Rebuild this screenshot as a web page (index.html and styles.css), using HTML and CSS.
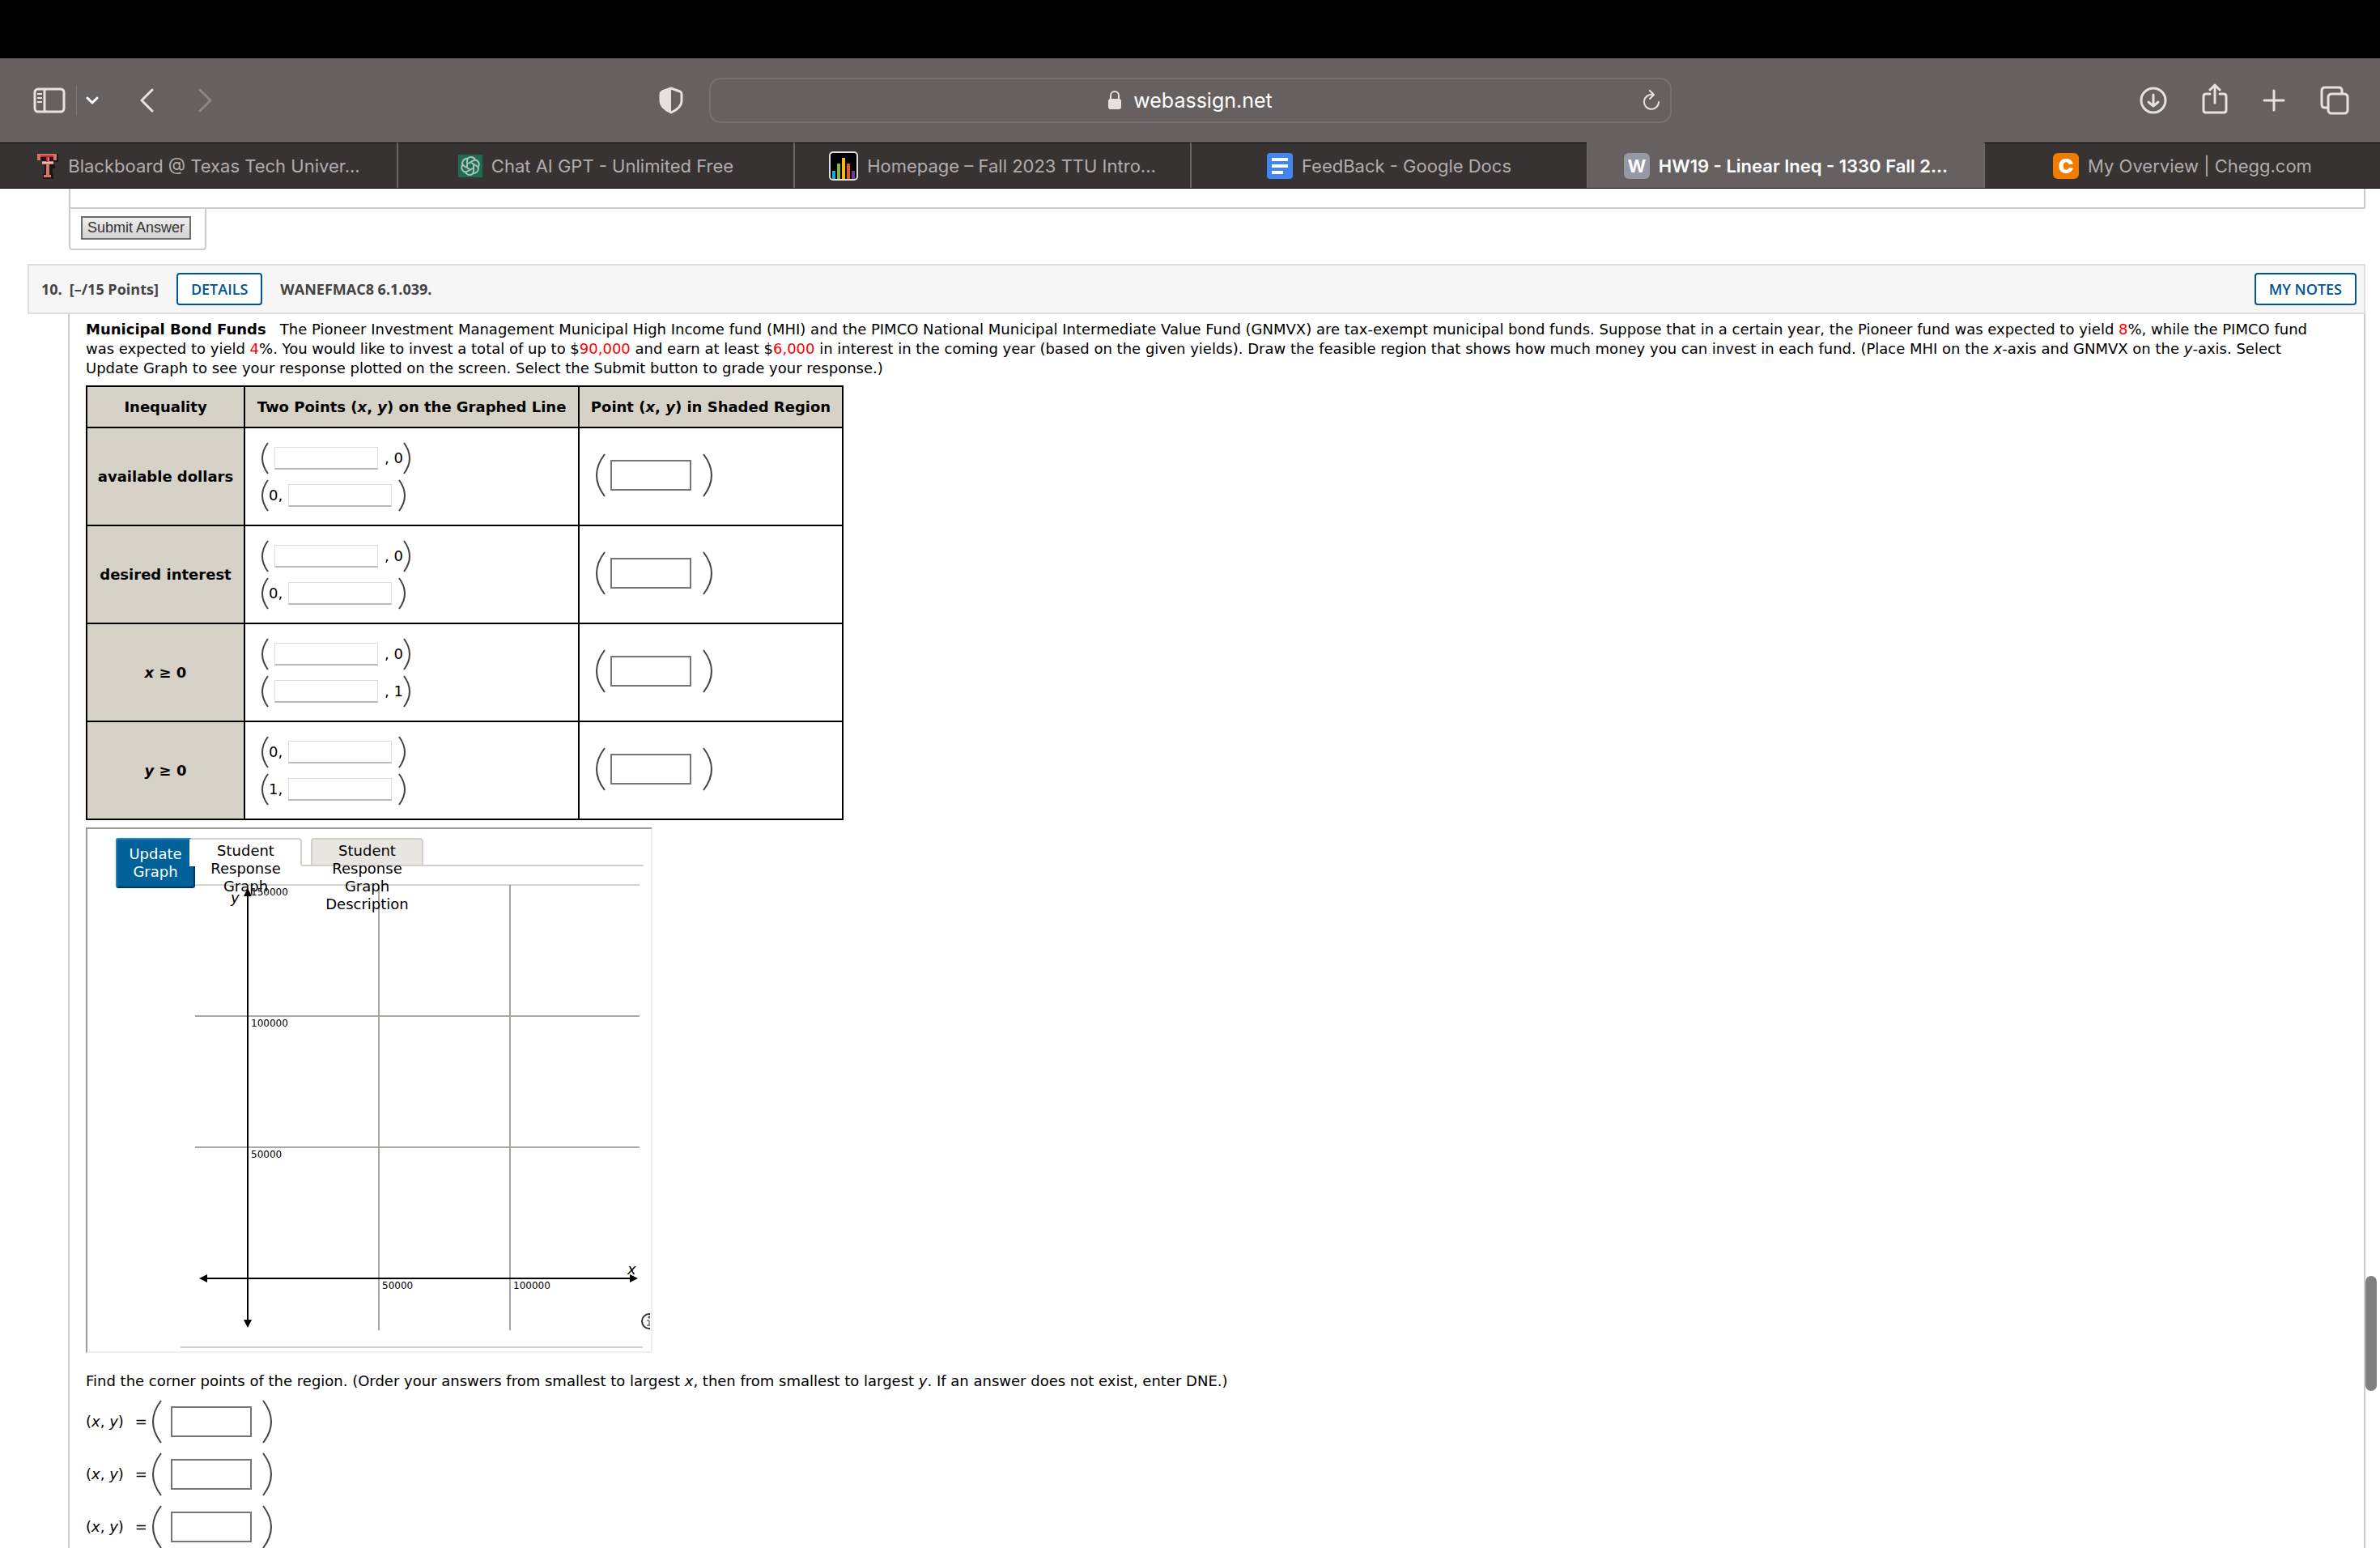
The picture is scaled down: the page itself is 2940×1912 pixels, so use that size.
FILE: index.html
```html
<!DOCTYPE html>
<html lang="en">
<head>
  <meta charset="UTF-8">
  <title>HW19 - Linear Ineq - 1330 Fall 2023</title>
  <link rel="stylesheet" href="styles.css">
</head>
<body>

  <!-- Browser toolbar -->
  <header class="browser">
    <div class="toolbar">
      <div class="tools-left">
        <button class="icon-btn" aria-label="Sidebar"><svg width="40" height="32" viewBox="0 0 40 32" fill="none" stroke="#e6e1e0" stroke-width="3"><rect x="2" y="2" width="36" height="28" rx="4"/><path d="M14 2v28"/><path d="M5 8h6M5 13h6M5 18h6" stroke-width="2"/></svg></button>
        <span class="divider"></span>
        <button class="icon-btn" aria-label="Tab groups"><svg width="16" height="10" viewBox="0 0 16 10" fill="none" stroke="#fff" stroke-width="3" stroke-linecap="round" stroke-linejoin="round"><path d="M2 2l6 6 6-6"/></svg></button>
        <button class="icon-btn back" aria-label="Back"><svg width="18" height="30" viewBox="0 0 18 30" fill="none" stroke="#e6e1e0" stroke-width="3" stroke-linecap="round" stroke-linejoin="round"><path d="M16 2L3 15l13 13"/></svg></button>
        <button class="icon-btn forward" aria-label="Forward"><svg width="18" height="30" viewBox="0 0 18 30" fill="none" stroke="#8d8786" stroke-width="3" stroke-linecap="round" stroke-linejoin="round"><path d="M2 2l13 13L2 28"/></svg></button>
      </div>
      <div class="tools-center">
        <button class="icon-btn" aria-label="Privacy report"><svg width="30" height="34" viewBox="0 0 30 34"><path d="M15 2l11 4q2 1 2 3v9q0 8-13 14Q2 26 2 18V9q0-2 2-3z" fill="none" stroke="#e6e1e0" stroke-width="3" stroke-linejoin="round"/><path d="M15 2L4 6Q2 7 2 9v9q0 8 13 14z" fill="#e6e1e0"/></svg></button>
        <div class="address">
          <svg width="18" height="24" viewBox="0 0 18 24"><rect x="1" y="10" width="16" height="13" rx="3" fill="#e6e1e0"/><path d="M4 11V6a5 5 0 0 1 10 0v5" fill="none" stroke="#e6e1e0" stroke-width="2"/></svg>
          <span>webassign.net</span>
          <button class="icon-btn reload" aria-label="Reload"><svg width="22" height="26" viewBox="0 0 22 26" fill="none" stroke="#e6e1e0" stroke-width="2" stroke-linecap="round" stroke-linejoin="round"><path d="M13 6a9 9 0 1 0 7 9M9 1l5 5-5 5"/></svg></button>
        </div>
      </div>
      <div class="tools-right">
        <button class="icon-btn" aria-label="Downloads"><svg width="34" height="34" viewBox="0 0 34 34" fill="none" stroke="#e6e1e0" stroke-width="3" stroke-linecap="round" stroke-linejoin="round"><circle cx="17" cy="17" r="15"/><path d="M17 10v14M11 19l6 5 6-5"/></svg></button>
        <button class="icon-btn share" aria-label="Share"><svg width="32" height="38" viewBox="0 0 32 38" fill="none" stroke="#e6e1e0" stroke-width="3" stroke-linecap="round" stroke-linejoin="round"><path d="M10 13H5q-3 0-3 3v17q0 3 3 3h22q3 0 3-3V16q0-3-3-3h-5M16 24V2M10 8l6-6 6 6"/></svg></button>
        <button class="icon-btn" aria-label="New tab"><svg width="28" height="28" viewBox="0 0 28 28" stroke="#e6e1e0" stroke-width="3" stroke-linecap="round"><path d="M14 2v24M2 14h24"/></svg></button>
        <button class="icon-btn" aria-label="Tab overview"><svg width="36" height="36" viewBox="0 0 36 36" fill="none" stroke="#e6e1e0" stroke-width="3"><rect x="10" y="10" width="24" height="24" rx="4"/><path d="M10 27H6q-4 0-4-4V6q0-4 4-4h17q4 0 4 4v4"/></svg></button>
      </div>
    </div>

    <nav class="tabs">
      <a href="#" class="tab"><svg width="28" height="32" viewBox="0 0 28 32"><path d="M1 1h26v10h-6V9h-1v5h3v5h-3v7h1v6H8v-6h2V14H7V9H6H1z" fill="#1a1717"/><path d="M1 1h24v8h-4V5h-5v5h5v4h-5v13h2v3H9v-3h3V14H7v-4h5V5H5v4H1z" fill="#d8736c"/><path d="M5 3h16v2H5zM12 5h2v6h-2z" fill="#c22a2c"/><path d="M7 11h14v2H7z" fill="#e5bdb6"/></svg>Blackboard @ Texas Tech Univer...</a>
      <a href="#" class="tab"><svg width="30" height="28" viewBox="0 0 30 28"><rect width="30" height="28" fill="#1e6b52"/><g fill="none" stroke="#a9c2b9" stroke-width="2"><path id="petal" d="M11 15V8q0-5 5-5 3 0 5 3"/><use href="#petal" transform="rotate(60 15 14)"/><use href="#petal" transform="rotate(120 15 14)"/><use href="#petal" transform="rotate(180 15 14)"/><use href="#petal" transform="rotate(240 15 14)"/><use href="#petal" transform="rotate(300 15 14)"/></g></svg>Chat AI GPT - Unlimited Free</a>
      <a href="#" class="tab"><svg width="36" height="36" viewBox="0 0 36 36"><rect x="1" y="1" width="34" height="34" rx="4" fill="#000" stroke="#e0dede" stroke-width="2"/><path d="M4 24h4v10H4z" fill="#1ba7e0"/><path d="M10 15h4v19h-4z" fill="#7fba3c"/><path d="M16 8h4v26h-4z" fill="#f9b815"/><path d="M22 15h4v19h-4z" fill="#e35c26"/><path d="M28 24h4v10h-4z" fill="#6a3c97"/></svg>Homepage – Fall 2023 TTU Intro...</a>
      <a href="#" class="tab"><svg width="32" height="32" viewBox="0 0 32 32"><rect width="32" height="32" rx="4" fill="#4285f4"/><path d="M6 6h20v4H6zM6 14h20v4H6zM6 22h14v4H6z" fill="#fff"/></svg>FeedBack - Google Docs</a>
      <a href="#" class="tab active"><span class="favicon gray">W</span>HW19 - Linear Ineq - 1330 Fall 2...</a>
      <a href="#" class="tab"><span class="favicon orange">C</span>My Overview | Chegg.com</a>
    </nav>
  </header>

  <main class="page">
    <!-- End of question 9 -->
    <section class="previous"></section>
    <div class="submit-box">
      <button class="submit">Submit Answer</button>
    </div>

    <!-- Question 10 -->
    <section class="question">
      <div class="question-header">
        <span class="number">10.</span>
        <span class="points">[–/15 Points]</span>
        <button class="outline-btn">DETAILS</button>
        <span class="code">WANEFMAC8 6.1.039.</span>
        <button class="outline-btn notes">MY NOTES</button>
      </div>

      <div class="question-body">
        <p class="prompt"><b>Municipal Bond Funds</b> &nbsp; The Pioneer Investment Management Municipal High Income fund (MHI) and the PIMCO National Municipal Intermediate Value Fund (GNMVX) are tax-exempt municipal bond funds. Suppose that in a certain year, the Pioneer fund was expected to yield <span class="red">8</span>%, while the PIMCO fund<br>
        was expected to yield <span class="red">4</span>%. You would like to invest a total of up to $<span class="red">90,000</span> and earn at least $<span class="red">6,000</span> in interest in the coming year (based on the given yields). Draw the feasible region that shows how much money you can invest in each fund. (Place MHI on the <i>x</i>-axis and GNMVX on the <i>y</i>-axis. Select<br>
        Update Graph to see your response plotted on the screen. Select the Submit button to grade your response.)</p>

        <table class="inequalities">
          <thead>
            <tr>
              <th class="col-name">Inequality</th>
              <th class="col-line">Two Points (<i>x</i>, <i>y</i>) on the Graphed Line</th>
              <th class="col-point">Point (<i>x</i>, <i>y</i>) in Shaded Region</th>
            </tr>
          </thead>
          <tbody>
            <tr>
              <th>available dollars</th>
              <td>
                <div class="pair"><svg class="paren" viewBox="0 0 10 40"><path d="M9 1Q-5 20 9 39"/></svg><input type="text" class="x-first" aria-label="available dollars x-intercept"><span>, 0</span><svg class="paren" viewBox="0 0 10 40"><path d="M1 1Q15 20 1 39"/></svg></div>
                <div class="pair"><svg class="paren" viewBox="0 0 10 40"><path d="M9 1Q-5 20 9 39"/></svg><span>0,</span><input type="text" class="y-last" aria-label="available dollars y-intercept"><svg class="paren" viewBox="0 0 10 40"><path d="M1 1Q15 20 1 39"/></svg></div>
              </td>
              <td><div class="point"><svg class="paren-lg" viewBox="0 0 13 54"><path d="M12 1Q-8 27 12 53"/></svg><input type="text" aria-label="available dollars shaded point"><svg class="paren-lg" viewBox="0 0 13 54"><path d="M1 1Q21 27 1 53"/></svg></div></td>
            </tr>
            <tr>
              <th>desired interest</th>
              <td>
                <div class="pair"><svg class="paren" viewBox="0 0 10 40"><path d="M9 1Q-5 20 9 39"/></svg><input type="text" class="x-first" aria-label="desired interest x-intercept"><span>, 0</span><svg class="paren" viewBox="0 0 10 40"><path d="M1 1Q15 20 1 39"/></svg></div>
                <div class="pair"><svg class="paren" viewBox="0 0 10 40"><path d="M9 1Q-5 20 9 39"/></svg><span>0,</span><input type="text" class="y-last" aria-label="desired interest y-intercept"><svg class="paren" viewBox="0 0 10 40"><path d="M1 1Q15 20 1 39"/></svg></div>
              </td>
              <td><div class="point"><svg class="paren-lg" viewBox="0 0 13 54"><path d="M12 1Q-8 27 12 53"/></svg><input type="text" aria-label="desired interest shaded point"><svg class="paren-lg" viewBox="0 0 13 54"><path d="M1 1Q21 27 1 53"/></svg></div></td>
            </tr>
            <tr>
              <th><i>x</i> ≥ 0</th>
              <td>
                <div class="pair"><svg class="paren" viewBox="0 0 10 40"><path d="M9 1Q-5 20 9 39"/></svg><input type="text" class="x-first" aria-label="x at y = 0"><span>, 0</span><svg class="paren" viewBox="0 0 10 40"><path d="M1 1Q15 20 1 39"/></svg></div>
                <div class="pair"><svg class="paren" viewBox="0 0 10 40"><path d="M9 1Q-5 20 9 39"/></svg><input type="text" class="x-first" aria-label="x at y = 1"><span>, 1</span><svg class="paren" viewBox="0 0 10 40"><path d="M1 1Q15 20 1 39"/></svg></div>
              </td>
              <td><div class="point"><svg class="paren-lg" viewBox="0 0 13 54"><path d="M12 1Q-8 27 12 53"/></svg><input type="text" aria-label="x ≥ 0 shaded point"><svg class="paren-lg" viewBox="0 0 13 54"><path d="M1 1Q21 27 1 53"/></svg></div></td>
            </tr>
            <tr>
              <th><i>y</i> ≥ 0</th>
              <td>
                <div class="pair"><svg class="paren" viewBox="0 0 10 40"><path d="M9 1Q-5 20 9 39"/></svg><span>0,</span><input type="text" class="y-last" aria-label="y at x = 0"><svg class="paren" viewBox="0 0 10 40"><path d="M1 1Q15 20 1 39"/></svg></div>
                <div class="pair"><svg class="paren" viewBox="0 0 10 40"><path d="M9 1Q-5 20 9 39"/></svg><span>1,</span><input type="text" class="y-last" aria-label="y at x = 1"><svg class="paren" viewBox="0 0 10 40"><path d="M1 1Q15 20 1 39"/></svg></div>
              </td>
              <td><div class="point"><svg class="paren-lg" viewBox="0 0 13 54"><path d="M12 1Q-8 27 12 53"/></svg><input type="text" aria-label="y ≥ 0 shaded point"><svg class="paren-lg" viewBox="0 0 13 54"><path d="M1 1Q21 27 1 53"/></svg></div></td>
            </tr>
          </tbody>
        </table>

        <!-- Graph tool, the tabs hang over the plot -->
        <div class="graph-frame">
          <div class="graph-tabs">
            <span class="tab-line"></span>
            <button class="update">Update<br>Graph</button>
            <button class="graph-tab selected">Student<br>Response<br>Graph</button>
            <button class="graph-tab">Student<br>Response<br>Graph<br>Description</button>
          </div>
          <svg class="plot" width="697" height="645" viewBox="108 1024 697 645">
            <g stroke="#a9a8a0" stroke-width="2">
              <path d="M241 1093h549" stroke-width="1"/>
              <path d="M241 1255h549M241 1417h549M468 1093v550M630 1093v550"/>
            </g>
            <path d="M306 1100v534M252 1579h530" stroke="#000" stroke-width="2"/>
            <path d="M306 1097l5 10h-10zM306 1640l5-10h-10zM246 1579l10-5v10zM788 1579l-10-5v10z"/>
            <path d="M223 1664h571" stroke="#d2d2ce" stroke-width="2"/>
            <g class="ticks">
              <text x="310" y="1106">150000</text>
              <text x="310" y="1268">100000</text>
              <text x="310" y="1430">50000</text>
              <text x="472" y="1592">50000</text>
              <text x="634" y="1592">100000</text>
            </g>
            <text class="axis" x="285" y="1115">y</text>
            <text class="axis" x="775" y="1574">x</text>
            <svg x="790" y="1620" width="13" height="24" viewBox="0 0 13 24"><ellipse cx="12" cy="12" rx="9" ry="9" fill="none" stroke="#333" stroke-width="2"/><path d="M9 11h3v6M9 17h4M11 6h2v2h-2z" fill="none" stroke="#333" stroke-width="1"/></svg>
          </svg>
        </div>

        <p class="corners">Find the corner points of the region. (Order your answers from smallest to largest <i>x</i>, then from smallest to largest <i>y</i>. If an answer does not exist, enter DNE.)</p>
        <div class="answer"><label for="corner1">(<i>x</i>, <i>y</i>)</label><span>=</span><svg class="paren-lg" viewBox="0 0 13 54"><path d="M12 1Q-8 27 12 53"/></svg><input type="text" id="corner1"><svg class="paren-lg" viewBox="0 0 13 54"><path d="M1 1Q21 27 1 53"/></svg></div>
        <div class="answer"><label for="corner2">(<i>x</i>, <i>y</i>)</label><span>=</span><svg class="paren-lg" viewBox="0 0 13 54"><path d="M12 1Q-8 27 12 53"/></svg><input type="text" id="corner2"><svg class="paren-lg" viewBox="0 0 13 54"><path d="M1 1Q21 27 1 53"/></svg></div>
        <div class="answer"><label for="corner3">(<i>x</i>, <i>y</i>)</label><span>=</span><svg class="paren-lg" viewBox="0 0 13 54"><path d="M12 1Q-8 27 12 53"/></svg><input type="text" id="corner3"><svg class="paren-lg" viewBox="0 0 13 54"><path d="M1 1Q21 27 1 53"/></svg></div>
      </div>
    </section>
    <div class="scroll-thumb"></div>
  </main>

</body>
</html>
```

FILE: styles.css
```css
* {
  box-sizing: border-box;
}
body {
  margin: 0;
  height: 100vh;
  overflow: hidden;
  display: flex;
  flex-direction: column;
  background: white;
  color: black;
  font-family: "DejaVu Sans", sans-serif;
  font-size: 18px;
}
button {
  font: inherit;
  color: inherit;
  margin: 0;
}
p {
  margin: 0;
}
svg {
  display: block;
  flex: none;
}

/* Browser */
.browser {
  flex: none;
  padding-top: 72px;
  background: black;
  font-family: Inter, sans-serif;
}
.toolbar {
  display: grid;
  grid-template-columns: 1fr 1313px 1fr;
  align-items: center;
  height: 104px;
  background: #666160;
}
.icon-btn {
  padding: 0;
  border: 0;
  background: none;
}
.tools-left, .tools-center, .tools-right {
  display: flex;
  align-items: center;
}
.tools-left {
  padding-left: 41px;
}
.divider {
  width: 1px;
  height: 36px;
  margin: 0 11px 0 13px;
  background: #7d7877;
}
.back {
  margin-left: 50px;
}
.forward {
  margin-left: 55px;
}
.tools-center {
  gap: 32px;
  padding-right: 62px;
}
.address {
  flex: 1;
  display: flex;
  align-items: center;
  justify-content: center;
  gap: 14px;
  height: 56px;
  border: 2px solid #777271;
  border-radius: 14px;
  color: white;
  font-size: 25px;
  position: relative;
}
.reload {
  position: absolute;
  right: 12px;
}
.tools-right {
  justify-content: flex-end;
  gap: 43px;
  padding-right: 38px;
}
.share {
  padding-bottom: 4px;
}
.tabs {
  display: grid;
  grid-template-columns: repeat(6, 1fr);
  height: 57px;
  border-bottom: 1px solid black;
}
.tab {
  display: flex;
  align-items: center;
  justify-content: center;
  gap: 11px;
  background: #373333;
  border-top: 1px solid black;
  border-left: 2px solid #6b6766;
  color: #b1adad;
  font-size: 22px;
  text-decoration: none;
  white-space: nowrap;
}
.tab:first-child {
  border-left: 0;
}
.tab.active {
  background: #666160;
  border-top-color: #666160;
  color: white;
  font-weight: 600;
}
.favicon {
  width: 32px;
  height: 32px;
  border-radius: 6px;
  color: white;
  font-weight: 700;
  line-height: 32px;
  text-align: center;
}
.gray {
  background: #9698a5;
}
.orange {
  background: #f07d00;
  font-size: 25px;
  font-weight: 900;
}

/* Page */
.page {
  flex: 1;
  min-height: 0;
  overflow: hidden;
  padding: 0 18px 0 34px;
  position: relative;
}
.previous {
  height: 25px;
  margin-left: 51px;
  border: 2px solid #ccc;
  border-top: 0;
}
.submit-box {
  display: inline-block;
  margin-left: 51px;
  padding: 9px 17px 11px 13px;
  border: 2px solid #ccc;
  border-top: 0;
  border-radius: 0 0 4px 4px;
  vertical-align: top;
}
.submit {
  display: block;
  height: 29px;
  padding: 0 6px;
  border: 2px solid #6c6c6c;
  background: linear-gradient(#eee, #d2d2d2);
  color: #333;
  font-family: "Liberation Sans", sans-serif;
  font-size: 18px;
}
.question {
  margin-top: 17px;
}
.question-header {
  display: flex;
  align-items: center;
  height: 62px;
  padding: 0 9px 0 15px;
  border: 2px solid #ddd;
  background: #f6f6f6;
  color: #444;
  font-family: "Open Sans", sans-serif;
  font-size: 18px;
  font-weight: 700;
}
.points {
  margin: 0 22px 0 9px;
}
.outline-btn {
  height: 40px;
  padding: 0 16px;
  border: 2px solid #00578e;
  border-radius: 4px;
  background: white;
  color: #00578e;
  font-weight: 600;
}
.code {
  margin-left: 22px;
}
.notes {
  margin-left: auto;
}
.question-body {
  margin-left: 50px;
  padding: 7px 0 100px 20px;
  border-left: 2px solid #ccc;
  border-right: 2px solid #ccc;
}
.prompt {
  line-height: 24px;
  white-space: nowrap;
}
.red {
  color: red;
}

/* Inequality table */
.inequalities {
  margin-top: 9px;
  border-collapse: collapse;
}
.inequalities th, .inequalities td {
  height: 121px;
  border: 2px solid black;
}
.inequalities thead th {
  height: 51px;
}
.inequalities th {
  padding: 0;
  background: #d6d2c7;
  white-space: nowrap;
}
.inequalities td {
  padding: 0 19px;
}
.col-name {
  width: 195px;
}
.col-line {
  width: 413px;
}
.col-point {
  width: 326px;
}
.pair, .point, .answer {
  display: flex;
  align-items: center;
}
.pair {
  height: 46px;
}
.point {
  padding-bottom: 4px;
}
.paren {
  width: 10px;
  height: 40px;
}
.paren-lg {
  width: 13px;
  height: 54px;
}
.paren, .paren-lg {
  fill: none;
  stroke: #444;
  stroke-width: 2;
}
.pair input {
  width: 128px;
  height: 28px;
  border: 1px solid #ddd;
  border-bottom: 2px solid #bbb;
}
.x-first, .y-last {
  margin: 0 8px 0 7px;
}
.point input, .answer input {
  width: 100px;
  height: 38px;
  border: 2px solid #767676;
}
.point input {
  margin: 0 14px 0 6px;
}

/* Graph */
.graph-frame {
  width: 700px;
  height: 649px;
  margin-top: 9px;
  border: 2px solid #eee;
  border-top-color: #999;
  border-left-color: #999;
  position: relative;
}
.graph-tabs {
  display: flex;
  align-items: flex-start;
  position: absolute;
  z-index: 1;
  top: 11px;
  left: 35px;
  right: 9px;
}
.update {
  width: 98px;
  height: 62px;
  padding: 0;
  border: 2px solid #00365c;
  border-top-color: #1c86cc;
  border-left-color: #1c86cc;
  border-radius: 3px;
  background: #006298;
  color: white;
  line-height: 22px;
}
.graph-tab {
  width: 139px;
  height: 35px;
  margin-right: 11px;
  padding: 3px 0;
  display: flex;
  justify-content: center;
  align-items: flex-start;
  border: 2px solid #d2d0c8;
  border-radius: 4px 4px 0 0;
  background: #e8e6e0;
  line-height: 22px;
}
.selected {
  margin-left: -7px;
  border-left-color: white;
  border-bottom-color: white;
  background: white;
}
.tab-line {
  position: absolute;
  z-index: -1;
  left: 229px;
  right: 0;
  top: 33px;
  height: 2px;
  background: #d2d0c8;
}
.ticks {
  font-size: 12px;
}
.axis {
  font-size: 18px;
  font-style: italic;
}

/* Corner points */
.corners {
  margin: 23px 0 5px;
  line-height: 24px;
}
.answer {
  height: 65px;
}
.answer span {
  margin: 0 5px 0 14px;
}
.answer input {
  margin: 0 13px 0 11px;
}
.scroll-thumb {
  position: absolute;
  top: 1343px;
  right: 4px;
  width: 14px;
  height: 142px;
  border-radius: 7px;
  background: #808080;
}
```
